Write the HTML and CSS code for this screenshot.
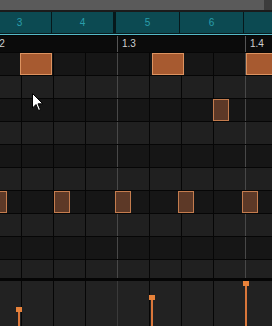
FILE: index.html
```html
<!DOCTYPE html>
<html lang="en">
<head>
    <meta charset="UTF-8">
    <meta name="viewport" content="width=device-width, initial-scale=1.0">
    <title>Piano Roll</title>
    <link rel="stylesheet" href="styles.css">
</head>
<body>
    <div class="roll">
        <div class="topbar"><span class="corner"></span></div>

        <div class="tabs">
            <div class="tab">3</div>
            <div class="tab bar-end">4</div>
            <div class="tab">5</div>
            <div class="tab">6</div>
            <div class="tab"></div>
        </div>
        <div class="tab-line"></div>

        <div class="ruler">
            <div class="bar first">1.2</div>
            <div class="bar">1.3</div>
            <div class="bar">1.4</div>
        </div>

        <div class="grid">
            <div class="row dark"></div>
            <div class="row"></div>
            <div class="row dark"></div>
            <div class="row"></div>
            <div class="row dark"></div>
            <div class="row"></div>
            <div class="row dark"></div>
            <div class="row"></div>
            <div class="row dark"></div>
            <div class="row"></div>

            <!-- notes -->
            <div class="note hot" style="left: 20px; top: 1px; width: 32px;"></div>
            <div class="note hot" style="left: 152px; top: 1px; width: 32px;"></div>
            <div class="note hot" style="left: 246px; top: 1px; width: 32px;"></div>
            <div class="note" style="left: 213px; top: 47px; width: 16px;"></div>
            <div class="note" style="left: -9px; top: 139px; width: 16px;"></div>
            <div class="note" style="left: 54px; top: 139px; width: 16px;"></div>
            <div class="note" style="left: 115px; top: 139px; width: 16px;"></div>
            <div class="note" style="left: 178px; top: 139px; width: 16px;"></div>
            <div class="note" style="left: 242px; top: 139px; width: 16px;"></div>

            <svg class="cursor" width="12" height="19" viewBox="0 0 12 19">
                <path d="M0.5 0.5 L0.5 15 L4 11.5 L6.5 17.5 L8.5 16.6 L6 10.8 L10.8 10.8 Z" fill="#fff" stroke="#000" stroke-width="1"/>
            </svg>
        </div>

        <div class="lane-split"></div>

        <div class="velocity">
            <div class="stem" style="left: 18px; top: 26px;"></div>
            <div class="stem" style="left: 151px; top: 14px;"></div>
            <div class="stem" style="left: 245px; top: 0px;"></div>
        </div>
    </div>
</body>
</html>
```

FILE: styles.css
```css
body {
    margin: 0;
    padding: 0;
    background: #1c1c1c;
    font-family: "Liberation Sans", Arial, sans-serif;
    overflow: hidden;
}
.roll {
    width: 272px;
    height: 326px;
    overflow: hidden;
    display: flex;
    flex-direction: column;
}
.topbar {
    height: 10px;
    background: #5a5a5a;
    border-bottom: 2px solid #1b1b1b;
    position: relative;
    flex: none;
}
.corner {
    position: absolute;
    right: 0;
    top: 0;
    width: 8px;
    height: 10px;
    background: #3c3c3c;
}
.tabs {
    display: flex;
    height: 21px;
    margin-left: -12px;
    background: #0c4a52;
    flex: none;
}
.tab {
    box-sizing: border-box;
    width: 64px;
    flex: none;
    border-right: 1px solid #06181b;
    color: #2a9eac;
    font-size: 10px;
    line-height: 21px;
    text-align: center;
}
.tab.bar-end {
    border-right-width: 3px;
}
.tab-line {
    height: 1px;
    background: #56b9c7;
    border-top: 1px solid #0a1a1c;
    border-bottom: 1px solid #050505;
    flex: none;
}
.ruler {
    display: flex;
    height: 16px;
    margin-left: -11px;
    background: #0b0b0b;
    flex: none;
}
.bar {
    box-sizing: border-box;
    width: 128px;
    flex: none;
    border-left: 1px solid #555;
    padding-left: 4px;
    color: #cfcfcf;
    font-size: 10px;
    line-height: 16px;
}
.bar.first {
    text-indent: -3px;
}
.grid {
    position: relative;
    height: 226px;
    overflow: hidden;
    flex: none;
}
.row {
    height: 22px;
    border-top: 1px solid #060606;
    background: linear-gradient(to right, #484848 0 1px, transparent 1px 32px, #060606 32px 33px, transparent 33px 64px, #060606 64px 65px, transparent 65px 96px, #060606 96px 97px, transparent 97px) -11px 0 / 128px 100% repeat-x, #202020;
}
.row.dark {
    background-color: #161616;
}
.note {
    position: absolute;
    box-sizing: border-box;
    height: 22px;
    background: #5d3927;
    border: 1px solid #c47c4e;
}
.note.hot {
    background: #a75a30;
    border-color: #dd9360;
}
.cursor {
    position: absolute;
    left: 32px;
    top: 41px;
}
.lane-split {
    height: 3px;
    background: #050505;
    flex: none;
}
.velocity {
    position: relative;
    flex: 1;
    background: linear-gradient(to right, #3a3a3a 0 1px, transparent 1px 32px, #060606 32px 33px, transparent 33px 64px, #060606 64px 65px, transparent 65px 96px, #060606 96px 97px, transparent 97px) -11px 0 / 128px 100% repeat-x, #222;
}
.stem {
    position: absolute;
    bottom: 0;
    width: 2px;
    background: #d9763a;
}
.stem::before {
    content: "";
    position: absolute;
    left: -2px;
    top: 0;
    width: 6px;
    height: 5px;
    background: #e8823a;
}
```
